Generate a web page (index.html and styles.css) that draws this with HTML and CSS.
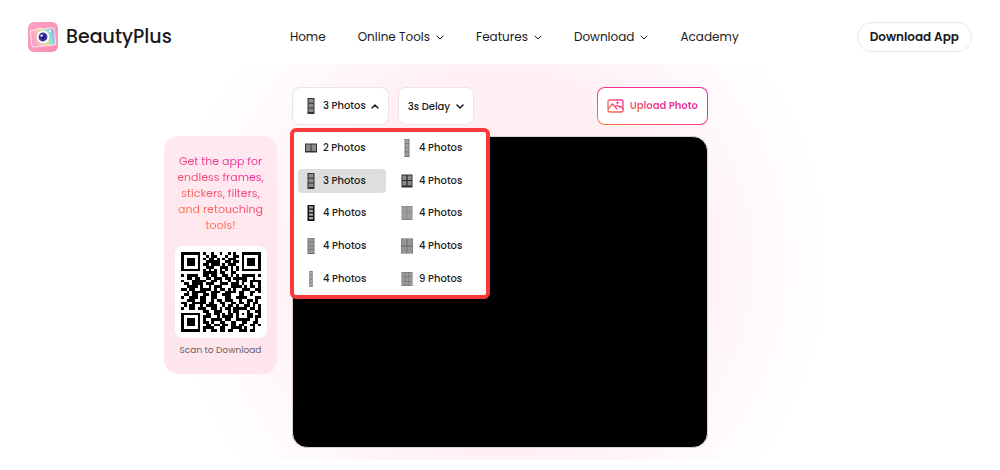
FILE: index.html
```
<!DOCTYPE html>
<html lang="en">
<head>
    <meta charset="UTF-8">
    <meta name="viewport" content="width=device-width, initial-scale=1.0">
    <title>BeautyPlus Photo Booth</title>
    <link rel="stylesheet" href="styles.css">
</head>
<body>
    <header class="header">
        <a class="logo" href="#">
            <svg width="30" height="30" viewBox="0 0 30 30" aria-hidden="true">
                <defs>
                    <linearGradient id="logo-bg" x1="0" y1="0" x2="1" y2="1">
                        <stop offset="0" stop-color="#fb9fc8"/>
                        <stop offset="1" stop-color="#fd8eae"/>
                    </linearGradient>
                    <linearGradient id="logo-cam" x1="0" y1="0.6" x2="1" y2="0.4">
                        <stop offset="0" stop-color="#f79ad0"/>
                        <stop offset="0.35" stop-color="#f6c3b4"/>
                        <stop offset="0.6" stop-color="#d9e2a8"/>
                        <stop offset="0.8" stop-color="#7fe0d8"/>
                        <stop offset="1" stop-color="#b59cf0"/>
                    </linearGradient>
                </defs>
                <rect width="30" height="30" rx="6" fill="url(#logo-bg)"/>
                <g transform="rotate(-6 15 15)">
                    <path d="M5 7h4l1-1h4l1 1h10a2 2 0 0 1 2 2v13a2 2 0 0 1-2 2H5a2 2 0 0 1-2-2V9a2 2 0 0 1 2-2z" fill="url(#logo-cam)" stroke="#ffe3ee" stroke-width="1"/>
                    <circle cx="15" cy="15" r="6.3" fill="#fff"/>
                    <circle cx="15" cy="15" r="4.4" fill="#3b2fa0"/>
                    <circle cx="15" cy="15" r="2" fill="#241a78"/>
                    <circle cx="13.8" cy="13.5" r="1.2" fill="#fff"/>
                    <circle cx="22.5" cy="10" r="1.2" fill="#fff"/>
                </g>
            </svg>
            <span>BeautyPlus</span>
        </a>
        <nav class="nav">
            <a href="#">Home</a>
            <button type="button">Online Tools <svg class="caret" viewBox="0 0 8 8" aria-hidden="true"><path d="M1 3l3 3 3-3"/></svg></button>
            <button type="button">Features <svg class="caret" viewBox="0 0 8 8" aria-hidden="true"><path d="M1 3l3 3 3-3"/></svg></button>
            <button type="button">Download <svg class="caret" viewBox="0 0 8 8" aria-hidden="true"><path d="M1 3l3 3 3-3"/></svg></button>
            <a href="#">Academy</a>
        </nav>
        <a class="download-app" href="#">Download App</a>
    </header>

    <main class="booth">
        <aside class="promo">
            <p class="promo-text">Get the app for endless frames, stickers, filters, and retouching tools!</p>
            <div class="qr-card">
                <svg id="qr" class="qr" viewBox="0 0 29 29" shape-rendering="crispEdges" role="img" aria-label="QR code"></svg>
            </div>
            <p class="promo-note">Scan to Download</p>
        </aside>

        <section class="stage">
            <div class="toolbar">
                <div class="layout-picker">
                    <button type="button" class="control" aria-expanded="true" aria-controls="layout-menu">
                        <svg class="strip" viewBox="0 0 14 18" aria-hidden="true"><use href="#strip-3"/></svg>
                        3 Photos
                        <svg class="caret bold" viewBox="0 0 8 8" aria-hidden="true"><path d="M1 6l3-3 3 3"/></svg>
                    </button>
                    <div class="menu" id="layout-menu">
                        <button type="button"><svg class="strip" viewBox="0 0 14 18" aria-hidden="true"><use href="#strip-2"/></svg>2 Photos</button>
                        <button type="button" class="selected"><svg class="strip" viewBox="0 0 14 18" aria-hidden="true"><use href="#strip-3"/></svg>3 Photos</button>
                        <button type="button"><svg class="strip" viewBox="0 0 14 18" aria-hidden="true"><use href="#strip-4-dark"/></svg>4 Photos</button>
                        <button type="button"><svg class="strip" viewBox="0 0 14 18" aria-hidden="true"><use href="#strip-4"/></svg>4 Photos</button>
                        <button type="button"><svg class="strip" viewBox="0 0 14 18" aria-hidden="true"><use href="#strip-4-thin"/></svg>4 Photos</button>
                        <button type="button"><svg class="strip" viewBox="0 0 14 18" aria-hidden="true"><use href="#strip-4-tall"/></svg>4 Photos</button>
                        <button type="button"><svg class="strip" viewBox="0 0 14 18" aria-hidden="true"><use href="#grid-4-dark"/></svg>4 Photos</button>
                        <button type="button"><svg class="strip" viewBox="0 0 14 18" aria-hidden="true"><use href="#grid-4"/></svg>4 Photos</button>
                        <button type="button"><svg class="strip" viewBox="0 0 14 18" aria-hidden="true"><use href="#grid-4-wide"/></svg>4 Photos</button>
                        <button type="button"><svg class="strip" viewBox="0 0 14 18" aria-hidden="true"><use href="#grid-9"/></svg>9 Photos</button>
                    </div>
                </div>
                <label class="control delay">
                    <select aria-label="Timer delay">
                        <option>3s Delay</option>
                    </select>
                    <svg class="caret bold" viewBox="0 0 8 8" aria-hidden="true"><path d="M1 3l3 3 3-3"/></svg>
                </label>
                <button type="button" class="control upload">
                    <svg width="17" height="14" viewBox="0 0 17 14" fill="none" stroke="url(#brand)" stroke-width="1.3" stroke-linejoin="round" stroke-linecap="round" aria-hidden="true">
                        <defs>
                            <linearGradient id="brand" gradientUnits="userSpaceOnUse" x1="0" y1="14" x2="17" y2="0">
                                <stop offset="0" stop-color="#fb7a3c"/>
                                <stop offset="1" stop-color="#ee2f9b"/>
                            </linearGradient>
                        </defs>
                        <rect x="1" y="1" width="15" height="12" rx="1.5"/>
                        <path d="M1.5 9.5L5.5 5l4.5 5M8 7.8l2.6-1.6 2 2 1-1 2.4 3"/>
                        <circle cx="10.5" cy="3.8" r="0.6"/>
                    </svg>
                    <span>Upload Photo</span>
                </button>
            </div>
            <div class="camera"></div>
        </section>
    </main>

    <!-- Layout icons -->
    <svg class="sprite" aria-hidden="true">
        <symbol id="strip-2" viewBox="0 0 14 18">
            <rect x="1" y="4.5" width="12" height="9" fill="#333"/>
            <path d="M2 5.5h4.5V12H2zM7.5 5.5H12V12H7.5z" fill="#8a8a8a"/>
        </symbol>
        <symbol id="strip-3" viewBox="0 0 14 18">
            <rect x="3.5" y="1" width="7" height="16" fill="#333"/>
            <path d="M4.5 2h5v3.8h-5zM4.5 6.8h5v3.8h-5zM4.5 11.6h5v3.4h-5z" fill="#8c8c8c"/>
        </symbol>
        <symbol id="strip-4-dark" viewBox="0 0 14 18">
            <rect x="3.5" y="1" width="7" height="16" fill="#111"/>
            <path d="M5 2.2h4v2.4H5zM5 5.8h4v2.4H5zM5 9.4h4v2.4H5zM5 13h4v2.2H5z" fill="#a5a5a5"/>
        </symbol>
        <symbol id="strip-4" viewBox="0 0 14 18">
            <rect x="3.5" y="1" width="7" height="16" fill="#6c6c6c"/>
            <path d="M4.2 1.6h5.6v3.1H4.2zM4.2 5.4h5.6v3.1H4.2zM4.2 9.2h5.6v3.1H4.2zM4.2 13h5.6v3.1H4.2z" fill="#999"/>
        </symbol>
        <symbol id="strip-4-thin" viewBox="0 0 14 18">
            <rect x="5.3" y="1" width="3.4" height="16" fill="#777"/>
            <path d="M6 1.8h2v3H6zM6 5.6h2v3H6zM6 9.4h2v3H6zM6 13.2h2v3H6z" fill="#a8a8a8"/>
        </symbol>
        <symbol id="strip-4-tall" viewBox="0 0 14 18">
            <rect x="4.5" y="0" width="5" height="18" fill="#777"/>
            <path d="M5.4 0.8h3.2v3.4H5.4zM5.4 5h3.2v3.4H5.4zM5.4 9.2h3.2v3.4H5.4zM5.4 13.4h3.2v3.4H5.4z" fill="#a3a3a3"/>
        </symbol>
        <symbol id="grid-4-dark" viewBox="0 0 14 18">
            <rect x="1.5" y="2.5" width="11" height="13" fill="#2b2b2b"/>
            <path d="M2.4 3.4h4v4.6h-4zM7.6 3.4h4v4.6h-4zM2.4 9h4v4.6h-4zM7.6 9h4v4.6h-4z" fill="#8c8c8c"/>
        </symbol>
        <symbol id="grid-4" viewBox="0 0 14 18">
            <rect x="1.5" y="2" width="11" height="14" fill="#818181"/>
            <path d="M2 2.5h4.7v6H2zM7.3 2.5H12v6H7.3zM2 9.1h4.7v6H2zM7.3 9.1H12v6H7.3z" fill="#9d9d9d"/>
        </symbol>
        <symbol id="grid-4-wide" viewBox="0 0 14 18">
            <rect x="1" y="1.5" width="12" height="15" fill="#666"/>
            <path d="M1.4 1.9h5.2v6.7H1.4zM7.4 1.9h5.2v6.7H7.4zM1.4 9.4h5.2v6.7H1.4zM7.4 9.4h5.2v6.7H7.4z" fill="#959595"/>
        </symbol>
        <symbol id="grid-9" viewBox="0 0 14 18">
            <rect x="1.5" y="2" width="11" height="14" fill="#6f6f6f"/>
            <path d="M2 2.5h3v4H2zM5.5 2.5h3v4h-3zM9 2.5h3v4H9zM2 7h3v4H2zM5.5 7h3v4h-3zM9 7h3v4H9zM2 11.5h3v4H2zM5.5 11.5h3v4h-3zM9 11.5h3v4H9z" fill="#9b9b9b"/>
        </symbol>
    </svg>

    <script src="script.js"></script>
</body>
</html>
```
FILE: styles.css
```
* {
    box-sizing: border-box;
}
body {
    margin: 0;
    background: #ffffff;
    color: #1a1a1a;
    font-family: Poppins, Inter, "Open Sans", sans-serif;
    font-size: 10px;
}
a {
    color: inherit;
    text-decoration: none;
}
button,
select {
    padding: 0;
    border: none;
    background: none;
    color: inherit;
    font: inherit;
    cursor: pointer;
}

/* Header */
.header {
    display: flex;
    align-items: center;
    justify-content: space-between;
    padding: 22px 28px 12px;
}
.logo {
    display: flex;
    align-items: center;
    gap: 8px;
    font-size: 19px;
    line-height: 30px;
    font-weight: 500;
}
.nav {
    display: flex;
    align-items: center;
    gap: 32px;
    font-size: 12px;
}
.nav button {
    display: flex;
    align-items: center;
    gap: 6px;
}
.caret {
    width: 8px;
    height: 8px;
    fill: none;
    stroke: currentColor;
    stroke-width: 1;
    stroke-linecap: round;
    stroke-linejoin: round;
}
.caret.bold {
    stroke-width: 1.5;
}
.download-app {
    padding: 0 12px;
    border: 1px solid #e9e9e9;
    border-radius: 15px;
    font-size: 12px;
    line-height: 28px;
    font-weight: 600;
}

/* Photo booth */
.booth {
    display: grid;
    grid-template-columns: 113px minmax(0, 416px) 113px;
    justify-content: center;
    align-items: start;
    gap: 15px;
    padding: 23px 0 12px;
    background: radial-gradient(circle at center, #ffe9ee 0, #fff0f3 190px, #fffafb 270px, #ffffff 330px);
}
.promo {
    display: flex;
    flex-direction: column;
    align-items: center;
    margin-top: 49px;
    padding: 17px 10px 16px;
    border-radius: 14px;
    background: linear-gradient(160deg, #ffe9f0, #ffe5ec);
    text-align: center;
}
.promo p {
    margin: 0;
}
.promo-text {
    background: linear-gradient(30deg, #fb7a3c 15%, #ee2f9b 75%);
    background-clip: text;
    -webkit-background-clip: text;
    color: transparent;
    font-size: 11px;
    line-height: 16px;
}
.qr-card {
    display: flex;
    margin: 13px 0 4px;
    padding: 6px;
    border-radius: 8px;
    background: #ffffff;
}
.qr {
    width: 80px;
    height: 80px;
}
.promo-note {
    color: #6b6066;
    font-size: 9px;
    line-height: 16px;
    white-space: nowrap;
}

.toolbar {
    display: flex;
    gap: 9px;
}
.layout-picker {
    position: relative;
}
.control {
    display: flex;
    align-items: center;
    gap: 5px;
    height: 38px;
    padding: 0 9px;
    border: 1px solid #ece4e7;
    border-radius: 8px;
    background: #ffffff;
    font-weight: 500;
    white-space: nowrap;
}
.layout-picker .control {
    padding-left: 11px;
}
.control select {
    appearance: none;
    outline: none;
}
.control.upload {
    gap: 6px;
    margin-left: auto;
    border-color: transparent;
    background: linear-gradient(#ffffff, #ffffff) padding-box, linear-gradient(20deg, #fb7a3c, #ee2f9b 60%) border-box;
    font-weight: 600;
}
.upload span {
    background: linear-gradient(30deg, #fb7a3c, #ee2f9b 50%);
    background-clip: text;
    -webkit-background-clip: text;
    color: transparent;
}
.strip {
    flex: none;
    width: 14px;
    height: 18px;
}

/* Layout menu, opens over the camera */
.menu {
    position: absolute;
    top: 41px;
    left: -2px;
    z-index: 1;
    display: grid;
    grid-template: repeat(5, 1fr) / 88px 88px;
    grid-auto-flow: column;
    align-items: center;
    column-gap: 8px;
    height: 171px;
    padding: 0 4px;
    border: 4px solid #f93a3a;
    border-radius: 6px;
    background: #ffffff;
}
.menu button {
    display: flex;
    align-items: center;
    gap: 5px;
    height: 24px;
    padding-left: 6px;
    border-radius: 4px;
    font-weight: 500;
}
.menu .selected {
    background: #dedede;
}
.camera {
    aspect-ratio: 4 / 3;
    margin-top: 11px;
    border: 1px solid #d9d0d3;
    border-radius: 15px;
    background: #000000;
}
.sprite {
    display: none;
}
```
FILE: script.js
```
// Modules of the app download code, one string per row
const rows = [
    "#######.#..#..#..#.#..#######",
    "#.....#..#.##...#..##.#.....#",
    "#.###.#.#.##.#.#.###..#.###.#",
    "#.###.#..#####..##.##.#.###.#",
    "#.###.#.##.###.#.###..#.###.#",
    "#.....#..###..###.#.#.#.....#",
    "#######.#.#.#.#.#.#.#.#######",
    "........#####.##..##.........",
    "#.####..##.##..##.#.#.#####.#",
    "..##.##..##.###.##.#####..#..",
    "#...#####..##.#..#..#.##.####",
    ".##.####.###..###.###.#..#..#",
    "..####.#..#.###...####.#.##.#",
    "##.##..####.#.##.#.#..###..##",
    "..#.#####..###..####.##..##.#",
    ".##.##..##.##..###...##..#...",
    "#..###.##..##...##..####...##",
    "..###..##..#.##.###..#..##.#.",
    "##..#####.##..##..##.##.#.##.",
    ".#.##..#.####..#.##.#..##.#.#",
    "#..##.###..##.#.##.#####.##.#",
    "........##..###..#.##...#..##",
    "#######..##.##.#.##.#.#.##..#",
    "#.....#.###..#.####.#...##.##",
    "#.###.#.#..####.##..#####..#.",
    "#.###.#.##.#..##..##..##..##.",
    "#.###.#..##.##.##.##.##..##.#",
    "#.....#.####..##..####.#..#..",
    "#######.#..##.##.##..###.##.."
];

let d = "";
rows.forEach((row, y) => {
    for (let x = 0; x < row.length; x++) {
        if (row[x] === "#") d += `M${x} ${y}h1v1h-1z`;
    }
});

const path = document.createElementNS("http://www.w3.org/2000/svg", "path");
path.setAttribute("d", d);
document.getElementById("qr").appendChild(path);

// Open and close the layout menu
const picker = document.querySelector(".layout-picker .control");
picker.addEventListener("click", function () {
    const menu = document.getElementById("layout-menu");
    menu.hidden = !menu.hidden;
    menu.style.display = menu.hidden ? "none" : "";
    picker.setAttribute("aria-expanded", String(!menu.hidden));
});
```
